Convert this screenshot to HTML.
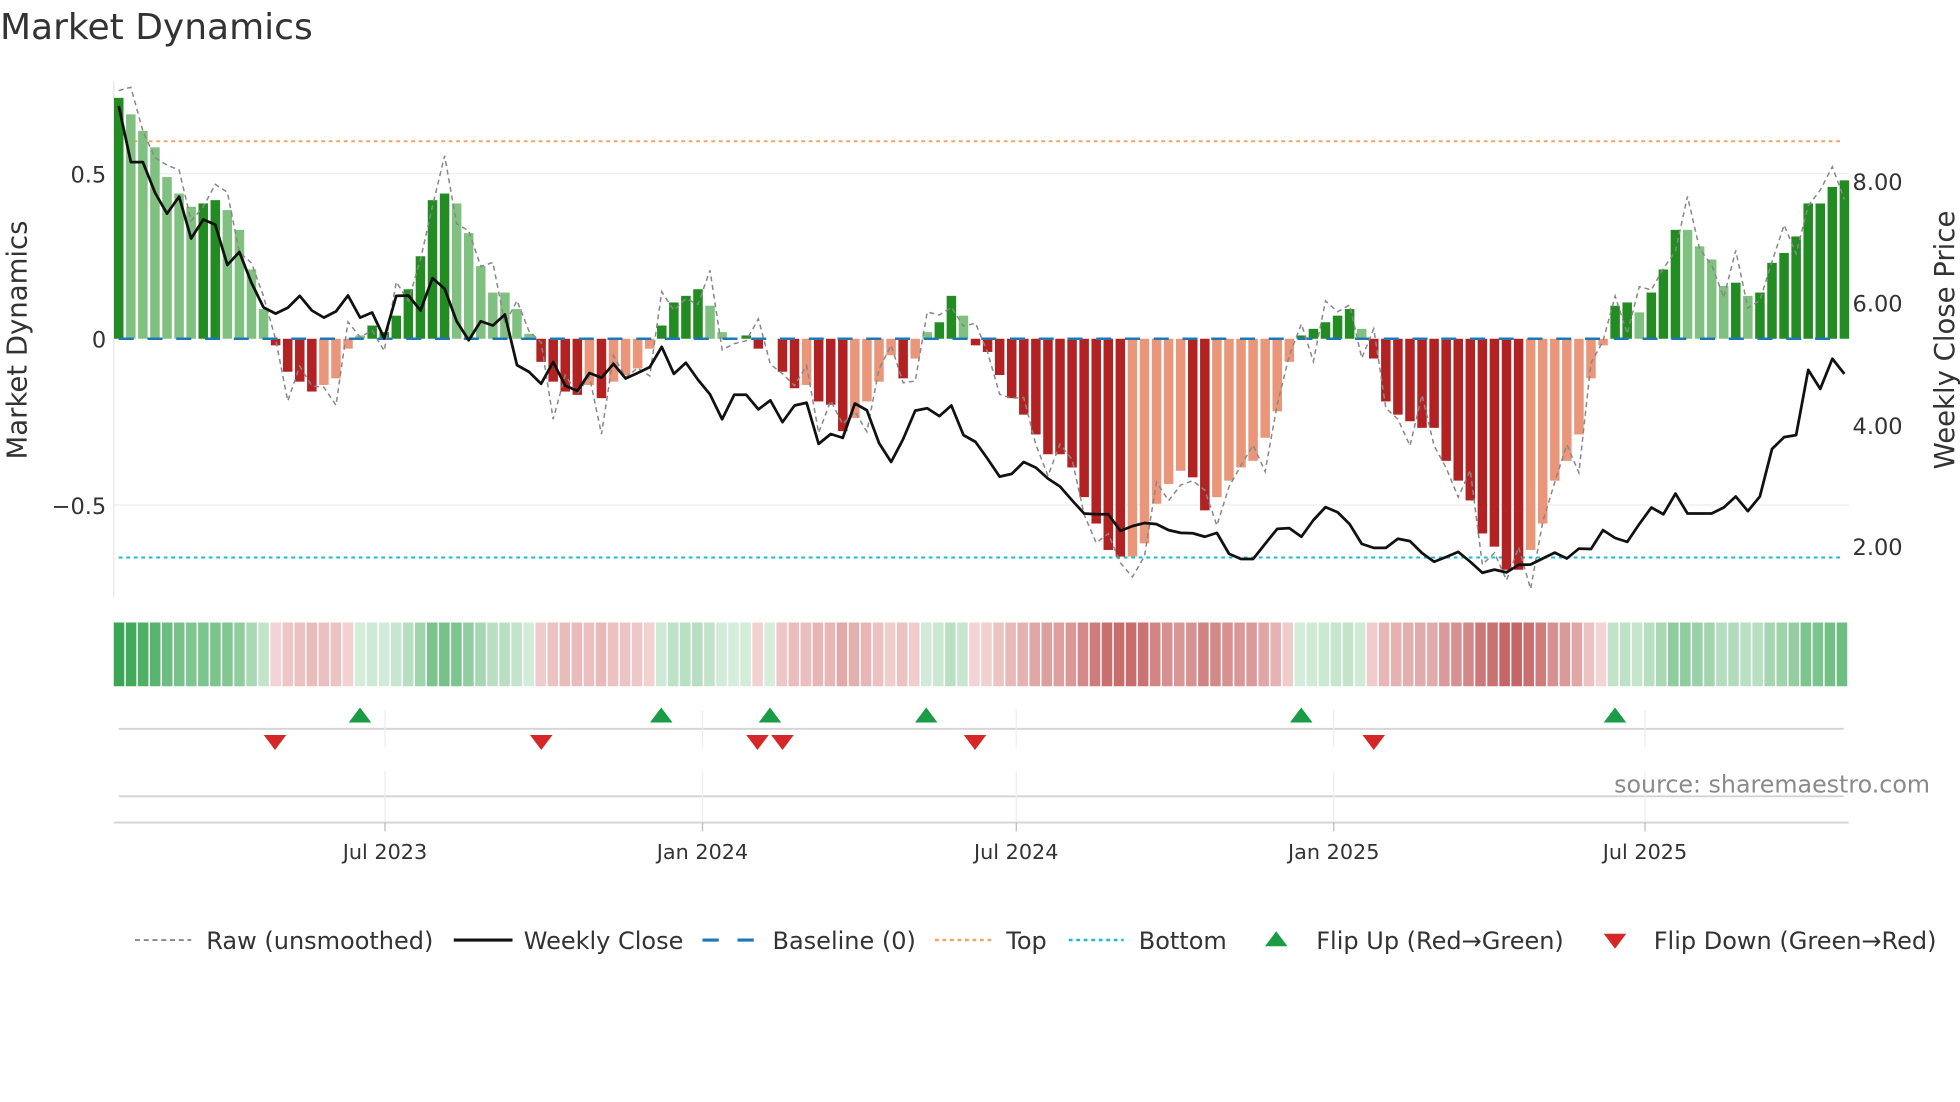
<!DOCTYPE html>
<html><head><meta charset="utf-8"><style>
html,body{margin:0;padding:0;background:#fff;width:1960px;height:1102px;overflow:hidden}
svg{display:block}
text{font-family:"DejaVu Sans","Liberation Sans",sans-serif;fill:#333}
</style></head><body>
<svg id="s" width="1960" height="1102" viewBox="0 0 1568 881.6" xmlns="http://www.w3.org/2000/svg">
<g id="g"></g>
<text x="0" y="31" font-size="28.8">Market Dynamics</text>
<text x="85" y="146" font-size="18">0.5</text>
<text x="85" y="278" font-size="18" text-anchor="end">0</text>
<text x="85" y="411" font-size="18" text-anchor="end">−0.5</text>
<text x="1482" y="152" font-size="18">8.00</text>
<text x="1482" y="249" font-size="18">6.00</text>
<text x="1482" y="347" font-size="18">4.00</text>
<text x="1482" y="444" font-size="18">2.00</text>
<text transform="translate(21,272) rotate(-90)" font-size="22" text-anchor="middle">Market Dynamics</text>
<text transform="translate(1563,272) rotate(-90)" font-size="22" text-anchor="middle">Weekly Close Price</text>
<text x="308" y="687" font-size="16.6" text-anchor="middle">Jul 2023</text>
<text x="562" y="687" font-size="16.6" text-anchor="middle">Jan 2024</text>
<text x="813" y="687" font-size="16.6" text-anchor="middle">Jul 2024</text>
<text x="1067" y="687" font-size="16.6" text-anchor="middle">Jan 2025</text>
<text x="1316" y="687" font-size="16.6" text-anchor="middle">Jul 2025</text>
<text x="1544" y="634" font-size="19" text-anchor="end" style="fill:#8a8a8a">source: sharemaestro.com</text>
<g font-size="19.2">
<line x1="108" y1="752" x2="153" y2="752" stroke="#888" stroke-width="1.5" stroke-dasharray="4,3"/>
<text x="165" y="759">Raw (unsmoothed)</text>
<line x1="363" y1="752" x2="410" y2="752" stroke="#111" stroke-width="2.5"/>
<text x="419" y="759">Weekly Close</text>
<line x1="562" y1="752" x2="607" y2="752" stroke="#1f77b4" stroke-width="2.5" stroke-dasharray="13,15"/>
<text x="618" y="759">Baseline (0)</text>
<line x1="748" y1="752" x2="793" y2="752" stroke="#f4a460" stroke-width="2" stroke-dasharray="3,3"/>
<text x="805" y="759">Top</text>
<line x1="855" y1="752" x2="899" y2="752" stroke="#17becf" stroke-width="2" stroke-dasharray="3,3"/>
<text x="911" y="759">Bottom</text>
<polygon points="1012,757 1030,757 1021,745" fill="#1a9b46"/>
<text x="1053" y="759">Flip Up (Red→Green)</text>
<polygon points="1283,747 1301,747 1292,759" fill="#d62728"/>
<text x="1323" y="759">Flip Down (Green→Red)</text>
</g>
</svg>
<script>
var NS="http://www.w3.org/2000/svg",g=document.getElementById('g');
function el(t,a){var e=document.createElementNS(NS,t);for(var k in a)e.setAttribute(k,a[k]);g.appendChild(e);return e;}
var V=[0.73,0.68,0.63,0.58,0.49,0.44,0.40,0.41,0.42,0.39,0.33,0.21,0.09,-0.02,-0.10,-0.13,-0.16,-0.14,-0.12,-0.03,
0.01,0.04,0.02,0.07,0.15,0.25,0.42,0.44,0.41,0.32,0.22,0.14,0.14,0.09,0.015,
-0.07,-0.13,-0.16,-0.17,-0.14,-0.18,-0.13,-0.11,-0.09,-0.03,
0.04,0.11,0.13,0.15,0.10,0.02,0,0.01,-0.03,0,-0.10,-0.15,-0.14,-0.19,-0.20,-0.28,-0.24,-0.19,-0.13,-0.05,-0.12,-0.06,0.02,0.05,0.13,0.07,-0.02,
-0.04,-0.11,-0.18,-0.23,-0.29,-0.35,-0.35,-0.39,-0.48,-0.56,-0.64,-0.66,-0.66,-0.62,-0.50,-0.44,-0.40,-0.42,-0.52,-0.48,-0.43,-0.39,-0.37,-0.30,-0.22,-0.07,
0.01,0.03,0.05,0.07,0.09,0.03,-0.06,-0.19,-0.23,-0.25,-0.27,-0.27,-0.37,-0.43,-0.49,-0.59,-0.63,-0.70,-0.70,-0.64,-0.56,-0.43,-0.37,-0.29,-0.12,-0.02,
0.10,0.11,0.08,0.14,0.21,0.33,0.33,0.28,0.24,0.16,0.17,0.13,0.14,0.23,0.26,0.31,0.41,0.41,0.46,0.48];
var C="DLLLLLLDDLLLLRRRRSSS"+"LDDDDDDDLLLLLLL"+"RRRRSRSSSS"+"DDDDLLLDRLRRSRRRSSSSRSLDDLR"+"RRRRRRRRRRRRSSSSSRRSSSSSSS"+"DDDDDLRRRRRRRRRRRRRSSSSSSS"+"DDLDDDLLLLDLDDDDDDDD";
var Z1=[268,410,410,487,540,497,603,555,568,670,637,715,777,793,778,748,785,803,787,747,803,790,855,748,747,785,703,730,812,860,812,823,795,923,940,970,915,975,988,943,955,920,957,943,928,877,945,917,960,997,1060,998,998,1035,1012,1067,1025,1018,1122,1097,1107,1020,1037,1120,1168,1110,1038,1032,1052,1025,1100,1117];
var Z2=[1160,1205,1198,1168,1182,1210,1230,1265,1298,1300,1300,1342,1330,1322,1325,1340,1347,1348,1357,1347,1400,1413,1413,1375,1337,1335,1357,1315,1282,1295,1325,1375,1385,1385,1362,1368,1398,1420,1408,1395,1420,1448,1440,1447,1428,1427,1412,1397,1412,1387,1388,1340,1360,1370,1325,1283,1300,1248,1298,1298,1298,1283,1255,1292,1255,1135,1105,1100,935,983,907,945];
var P=Z1.concat(Z2).map(function(z){return z/3.16;});
var N=144,x0=95,dx=9.654;
function X(i){return x0+dx*i;}
function Y(v){return 271-264*v;}
el('line',{x1:91,y1:139,x2:1479,y2:139,stroke:'#edf0f4','stroke-width':1.2});
el('line',{x1:91,y1:404,x2:1479,y2:404,stroke:'#edf0f4','stroke-width':1.2});
el('line',{x1:91,y1:65,x2:91,y2:478,stroke:'#e6e6e6','stroke-width':1});
el('line',{x1:95,y1:113,x2:1475,y2:113,stroke:'#f4a460','stroke-width':1.6,'stroke-dasharray':'3,3'});
el('line',{x1:95,y1:446,x2:1475,y2:446,stroke:'#17becf','stroke-width':1.6,'stroke-dasharray':'3,3'});
var col={D:'#228b22',L:'#80c080',R:'#b22222',S:'#e9967a'};
for(var i=0;i<N;i++){var v=V[i];if(Math.abs(v)<0.003)continue;var y=Y(v);
el('rect',{x:X(i)-3.8,y:Math.min(y,271),width:7.6,height:Math.abs(y-271),fill:col[C[i]]||'#80c080'});}
el('line',{x1:95,y1:271,x2:1475,y2:271,stroke:'#1f77b4','stroke-width':2,'stroke-dasharray':'12,11'});
var r='';for(i=0;i<N;i++){var rv=V[i]*1.03+0.06*Math.sin(i*1.7)+0.05*Math.sin(i*3.1);r+=(i?'L':'M')+X(i).toFixed(1)+','+Y(rv).toFixed(1);}
el('path',{d:r,fill:'none',stroke:'#888','stroke-width':1.2,'stroke-dasharray':'4,3'});
var p='';for(i=0;i<N;i++){p+=(i?'L':'M')+X(i).toFixed(1)+','+P[i].toFixed(1);}
el('path',{d:p,fill:'none',stroke:'#111','stroke-width':2.2,'stroke-linejoin':'round'});
function mix(a,b,t){return 'rgb('+[0,1,2].map(function(k){return Math.round(a[k]+(b[k]-a[k])*t);}).join(',')+')';}
var cw=(1479-91)/N;
for(i=0;i<N;i++){var v=V[i],t=Math.min(Math.abs(v)/0.72,1),c;
c=v>=0?mix([214,237,220],[58,166,85],t):mix([244,214,214],[196,98,98],t);
el('rect',{x:91+cw*i,y:498,width:cw-1.2,height:51,fill:c});}
el('line',{x1:95,y1:583,x2:1475,y2:583,stroke:'#d4d4d4','stroke-width':1.5});
el('line',{x1:95,y1:637,x2:1475,y2:637,stroke:'#d4d4d4','stroke-width':1.5});
el('line',{x1:91,y1:658,x2:1479,y2:658,stroke:'#d4d4d4','stroke-width':1.5});
[308,562,813,1067,1316].forEach(function(x){
el('line',{x1:x,y1:568,x2:x,y2:598,stroke:'#eee','stroke-width':1});
el('line',{x1:x,y1:617,x2:x,y2:657,stroke:'#eee','stroke-width':1});
el('line',{x1:x,y1:658,x2:x,y2:665,stroke:'#bbb','stroke-width':1});});
[288,529,616,741,1041,1292].forEach(function(x){el('polygon',{points:(x-9)+',578 '+(x+9)+',578 '+x+',566',fill:'#1a9b46'});});
[220,433,606,626,780,1099].forEach(function(x){el('polygon',{points:(x-9)+',588 '+(x+9)+',588 '+x+',600',fill:'#d62728'});});
document.querySelector('text[y="146"]').setAttribute('text-anchor','end');
</script>
</body></html>
